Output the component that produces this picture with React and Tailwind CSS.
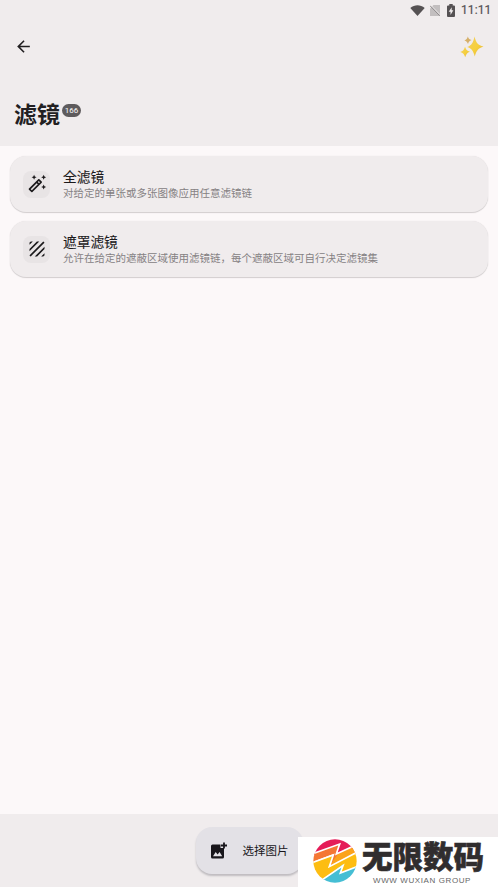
import { MdArrowBack, MdOutlineAutoFixHigh, MdTexture } from 'react-icons/md';

const filters = [
  { title: '全滤镜', text: '对给定的单张或多张图像应用任意滤镜链', icon: MdOutlineAutoFixHigh },
  { title: '遮罩滤镜', text: '允许在给定的遮蔽区域使用滤镜链，每个遮蔽区域可自行决定滤镜集', icon: MdTexture },
];

function StatusBar() {
  return (
    <div className="flex h-5 items-center justify-end pr-[8px] text-[#555153]">
      <svg className="h-[11px] w-[15px]" viewBox="0 0 15 11" fill="currentColor">
        <path d="M0.3 2.9C4.5-.6 10.5-.6 14.7 2.9L7.5 11z" />
      </svg>
      <svg className="ml-[5px] h-[11px] w-[10px] text-[#c2bebf]" viewBox="0 0 10 11" fill="currentColor">
        <path d="M3.5 0H10v11H0V3.5z" />
        <path d="M.9 .4L10 9.700" fill="none" stroke="#f0eced" strokeWidth="1" />
        <path d="M0 .7L9.700 10.700" fill="none" stroke="#8c8889" strokeWidth="1" />
      </svg>
      <svg className="ml-[7px] h-[13px] w-[8px]" viewBox="0 0 8 13" fill="currentColor">
        <path d="M2.3 0h3.4v1.4H7q1 0 1 1V12q0 1-1 1H1q-1 0-1-1V2.400q0-1 1-1h1.300z" />
        <path d="M4.700 3.300L1.700 7.700h1.800v3.200l2.900-4.600H4.700z" fill="#f0eced" />
      </svg>
      <span className="ml-[6px] w-[29px] whitespace-nowrap pt-px font-[Roboto] text-[12px] leading-[19px] tracking-[0.1px] [-webkit-text-stroke:0.2px_#555153]">11:11</span>
    </div>
  );
}

function Sparkles() {
  return (
    <svg className="h-6 w-6" viewBox="0 0 24 24">
      <defs>
        <linearGradient id="spark" x1="0" y1="0" x2="1" y2="1">
          <stop offset="0" stopColor="#f0cd62" />
          <stop offset=".55" stopColor="#f6d03c" />
          <stop offset="1" stopColor="#dfae45" />
        </linearGradient>
      </defs>
      <g fill="url(#spark)">
        <path d="M14.500 1.500C16.100 7.900 18 10.300 23.500 11.500C18.300 13.200 16.300 15.600 14.800 21.500C13.100 15.600 11.500 13.400 7.200 12.100C11.500 10.300 13.200 7.900 14.500 1.500z" />
        <path d="M5 11.800C6.200 15 7 15.900 9.900 16.700C7 17.800 6.200 19 5.200 22.200C4.200 19 3.100 17.800 .3 17C3.100 15.900 4 15 5 11.800z" />
        <path d="M7.800 1.500C8.700 3.800 9.400 4.400 11.600 5C9.400 6 8.700 6.800 8 9C7.200 6.800 6.500 6 4.400 5.400C6.500 4.400 7.100 3.800 7.800 1.500z" fill="#d6b06a" />
      </g>
    </svg>
  );
}

function AddImageIcon() {
  return (
    <svg className="h-[18px] w-[18px] shrink-0" viewBox="0 0 18 18" fill="currentColor">
      <path d="M2.500 2.500H10.500v3.500h3.500V15q0 1.500-1.500 1.500h-10Q1 16.500 1 15V4Q1 2.500 2.500 2.500zM3 14.300h9.200L9.600 9.900 7.600 12.500 5.700 10z" fillRule="evenodd" />
      <path d="M13.100.5h1.800v2.100H17v1.800h-2.100v2.100h-1.800V4.400h-2.100V2.600h2.100z" />
    </svg>
  );
}

function FilterCard({ title, text, icon: Icon }) {
  return (
    <div className="flex h-14 items-center rounded-2xl bg-[#f0eced] pl-[13px] shadow-[0_1px_1px_#d2cecf,0_0_1px_#dedadb]">
      <div className="flex h-[27px] w-[27px] items-center justify-center rounded-lg bg-[#e8e4e5] text-[#1b191b]">
        <Icon className="h-5 w-5" />
      </div>
      <div className="-mt-px ml-[13px]">
        <h2 className="text-[13.700px] leading-[16px] text-[#1b191b] [-webkit-text-stroke:0.1px_#1b191b]">{title}</h2>
        <p className="mt-px text-[10.500px] leading-[15px] text-[#858183]">{text}</p>
      </div>
    </div>
  );
}

function Brand() {
  return (
    <div className="absolute right-0 bottom-0 flex h-[50px] w-[200px] bg-white pl-[15px]">
      <svg className="mt-[2px] h-[44px] w-[44px] shrink-0" viewBox="10 8 132 132">
        <defs>
          <clipPath id="disc"><circle cx="76" cy="74" r="65" /></clipPath>
        </defs>
        <g clipPath="url(#disc)">
          <path d="M5 0H145V30L78 58L88 26L5 60z" fill="#e51c58" />
          <path d="M5 55L90 24L80 54L145 24V48L62 88L72 53L5 78z" fill="#f47734" />
          <path d="M84 54L145 26V48L62 90L68 76z" fill="#fba31c" />
          <path d="M5 78L72 56L58 92L145 46V88L94 110L101 84L25 140H5z" fill="#fdbd12" />
          <path d="M25 140L101 84L94 110L145 88V145H25z" fill="#45bed4" />
          <g fill="none" stroke="white" strokeWidth="5">
            <path d="M5 54L90 23L80 53L145 23" />
            <path d="M5 80L71 56L59 91L145 46" />
            <path d="M25 139L100 88L92 110L145 90" />
          </g>
        </g>
      </svg>
      <div className="ml-[5px] w-[124px]">
        <div className="whitespace-nowrap text-[30.500px] font-black leading-[37px] text-[#302d2e] [-webkit-text-stroke:0.6px_#302d2e]">无限数码</div>
        <div className="ml-[11px] mt-[2px] whitespace-nowrap font-['Liberation_Sans'] text-[8px] leading-[10px] tracking-[0.6px] text-[#666]">WWW WUXIAN GROUP</div>
      </div>
    </div>
  );
}

export default function App() {
  return (
    <div className="relative flex h-[887px] w-[498px] flex-col overflow-hidden bg-[#fcf8f9] font-['Noto_Sans_CJK_SC',sans-serif]">
      <header className="h-[146px] bg-[#f0eced]">
        <StatusBar />
        <div className="flex h-[53px] items-center justify-between pl-[14px] pr-[14px]">
          <MdArrowBack className="h-[19px] w-[19px] text-[#222022]" />
          <Sparkles />
        </div>
        <div className="flex items-start pl-[14px] pt-[22px]">
          <h1 className="text-[23px] font-bold leading-[36px] text-[#222022]">滤镜</h1>
          <span className="ml-[2px] mt-[9px] h-[13px] w-[19px] rounded-full bg-[#5e5b5d] text-center font-[Roboto] text-[8px] leading-[13px] text-white">166</span>
        </div>
      </header>

      <main className="flex flex-1 flex-col gap-[9px] px-[10px] pt-[10px]">
        {filters.map((filter) => <FilterCard key={filter.title} {...filter} />)}
      </main>

      <footer className="flex h-[73px] justify-center bg-[#f0eced] pt-[13px]">
        <button className="flex h-[47px] w-[107px] items-center rounded-2xl bg-[#e3e1e6] pl-[14px] text-[#18161b] shadow-[0_2px_2px_#bfbcc0]">
          <AddImageIcon />
          <span className="ml-[15px] whitespace-nowrap text-[11.500px]">选择图片</span>
        </button>
      </footer>

      <Brand />
    </div>
  );
}
